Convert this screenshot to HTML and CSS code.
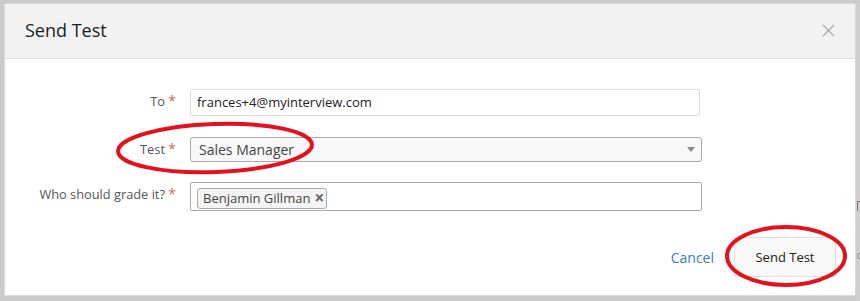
FILE: index.html
```html
<!DOCTYPE html>
<html>
<head>
<meta charset="utf-8">
<link rel="stylesheet" href="styles.css">
</head>
<body>
<div class="page">
  <div class="modal">
    <div class="modal-header">
      <h2 class="title">Send Test</h2>
      <svg class="close" width="13" height="13" viewBox="0 0 13 13"><path d="M1 1L12 12M12 1L1 12" stroke="#a9a9a9" stroke-width="1.2" fill="none"/></svg>
    </div>
    <div class="modal-body">
      <div class="row">
        <label class="label">To <span class="req">*</span></label>
        <div class="input">frances+4@myinterview.com</div>
      </div>
      <div class="row">
        <label class="label">Test <span class="req">*</span></label>
        <div class="select"><span>Sales Manager</span><span class="caret"></span></div>
      </div>
      <div class="row">
        <label class="label">Who should grade it? <span class="req">*</span></label>
        <div class="multi"><span class="tag">Benjamin Gillman <b class="tag-x">×</b></span></div>
      </div>
    </div>
    <div class="modal-footer">
      <a class="cancel">Cancel</a>
      <button class="btn">Send Test</button>
    </div>
  </div>
  <div class="behind">
    <span class="behind-m"></span>
    <span class="behind-e"></span>
  </div>
  <svg class="annot" width="860" height="301" viewBox="0 0 860 301">
    <ellipse cx="215" cy="148" rx="97" ry="24" transform="rotate(-2 215 148)" fill="none" stroke="#e60f1c" stroke-width="4"/>
    <ellipse cx="786" cy="256" rx="59" ry="29" fill="none" stroke="#e60f1c" stroke-width="4"/>
  </svg>
</div>
</body>
</html>
```
FILE: styles.css
```css
* { box-sizing: border-box; }
html, body { margin: 0; padding: 0; }
body {
  background: #cbcbcb;
  font-family: "Open Sans", "Noto Sans", sans-serif;
  color: #333;
  width: 860px;
  height: 301px;
  overflow: hidden;
}
.page {
  position: relative;
  display: flex;
  padding: 3px 0 0 4px;
  height: 301px;
}
.modal {
  width: 852px;
  height: 293px;
  background: #fff;
  border: 1px solid #d9d9d9;
  display: flex;
  flex-direction: column;
}
.modal-header {
  height: 55px;
  background: #f2f2f2;
  border-bottom: 1px solid #e3e3e3;
  display: flex;
  align-items: center;
  justify-content: space-between;
  padding: 0 20px 2px 20px;
}
.title {
  margin: 0;
  font-size: 18px;
  font-weight: 500;
  color: #1c1c1c;
}
.close { display: block; margin-top: 0; }
.modal-body {
  padding-top: 30px;
  display: flex;
  flex-direction: column;
  gap: 21px;
}
.row {
  display: grid;
  grid-template-columns: 171px 512px;
  column-gap: 14px;
  align-items: start;
}
.label {
  text-align: right;
  font-size: 12.8px;
  color: #555;
  padding-top: 2px;
}
.req { color: #e2625e; font-size: 14px; }
.input {
  height: 27px;
  width: 510px;
  border: 1px solid #ddd;
  border-radius: 2px;
  font-size: 13px;
  padding: 3px 0 0 6px;
  color: #222;
}
.select {
  height: 25px;
  border: 1px solid #aaa;
  border-radius: 3px;
  background: #f8f8f8;
  font-size: 14px;
  padding: 0 0 0 8px;
  display: flex;
  align-items: center;
  justify-content: space-between;
  color: #444;
}
.caret {
  width: 0; height: 0;
  border-left: 4px solid transparent;
  border-right: 4px solid transparent;
  border-top: 5px solid #888;
  margin-right: 6px;
}
.row:nth-child(3) { margin-top: -1px; }
.multi {
  height: 29px;
  border: 1px solid #aaa;
  border-radius: 2px;
  padding: 3px 0 0 6px;
}
.tag {
  display: inline-flex;
  align-items: center;
  height: 21px;
  width: 130px;
  border: 1px solid #aaa;
  border-radius: 3px;
  background: #f4f4f4;
  font-size: 13px;
  color: #444;
  padding: 0 0 0 5px;
  gap: 4px;
}
.tag-x { font-size: 17px; line-height: 1; color: #666; font-weight: 700; margin-top: -1px; }
.modal-footer {
  margin-top: 26px;
  display: flex;
  justify-content: flex-end;
  align-items: center;
  gap: 20px;
  padding-right: 19px;
}
.cancel {
  color: #3a7cc0;
  font-size: 14px;
}
.btn {
  width: 102px;
  height: 40px;
  border: 1px solid #ddd;
  background: #f8f8f8;
  border-radius: 2px;
  font-family: "Open Sans", sans-serif;
  font-size: 13px;
  color: #222;
}
.behind {
  flex: 1;
  position: relative;
  background: #cfcfcf;
}
.behind-m { position: absolute; left: 1px; top: 198px; width: 3px; height: 10px; border-left: 1px solid #8a7070; border-top: 1px solid #8a7070; }
.behind-e { position: absolute; left: 1px; top: 250px; width: 3px; height: 6px; border: 1px solid #999; border-radius: 3px 0 0 3px; border-right: none; }
.annot { position: absolute; left: 0; top: 0; pointer-events: none; }
```
